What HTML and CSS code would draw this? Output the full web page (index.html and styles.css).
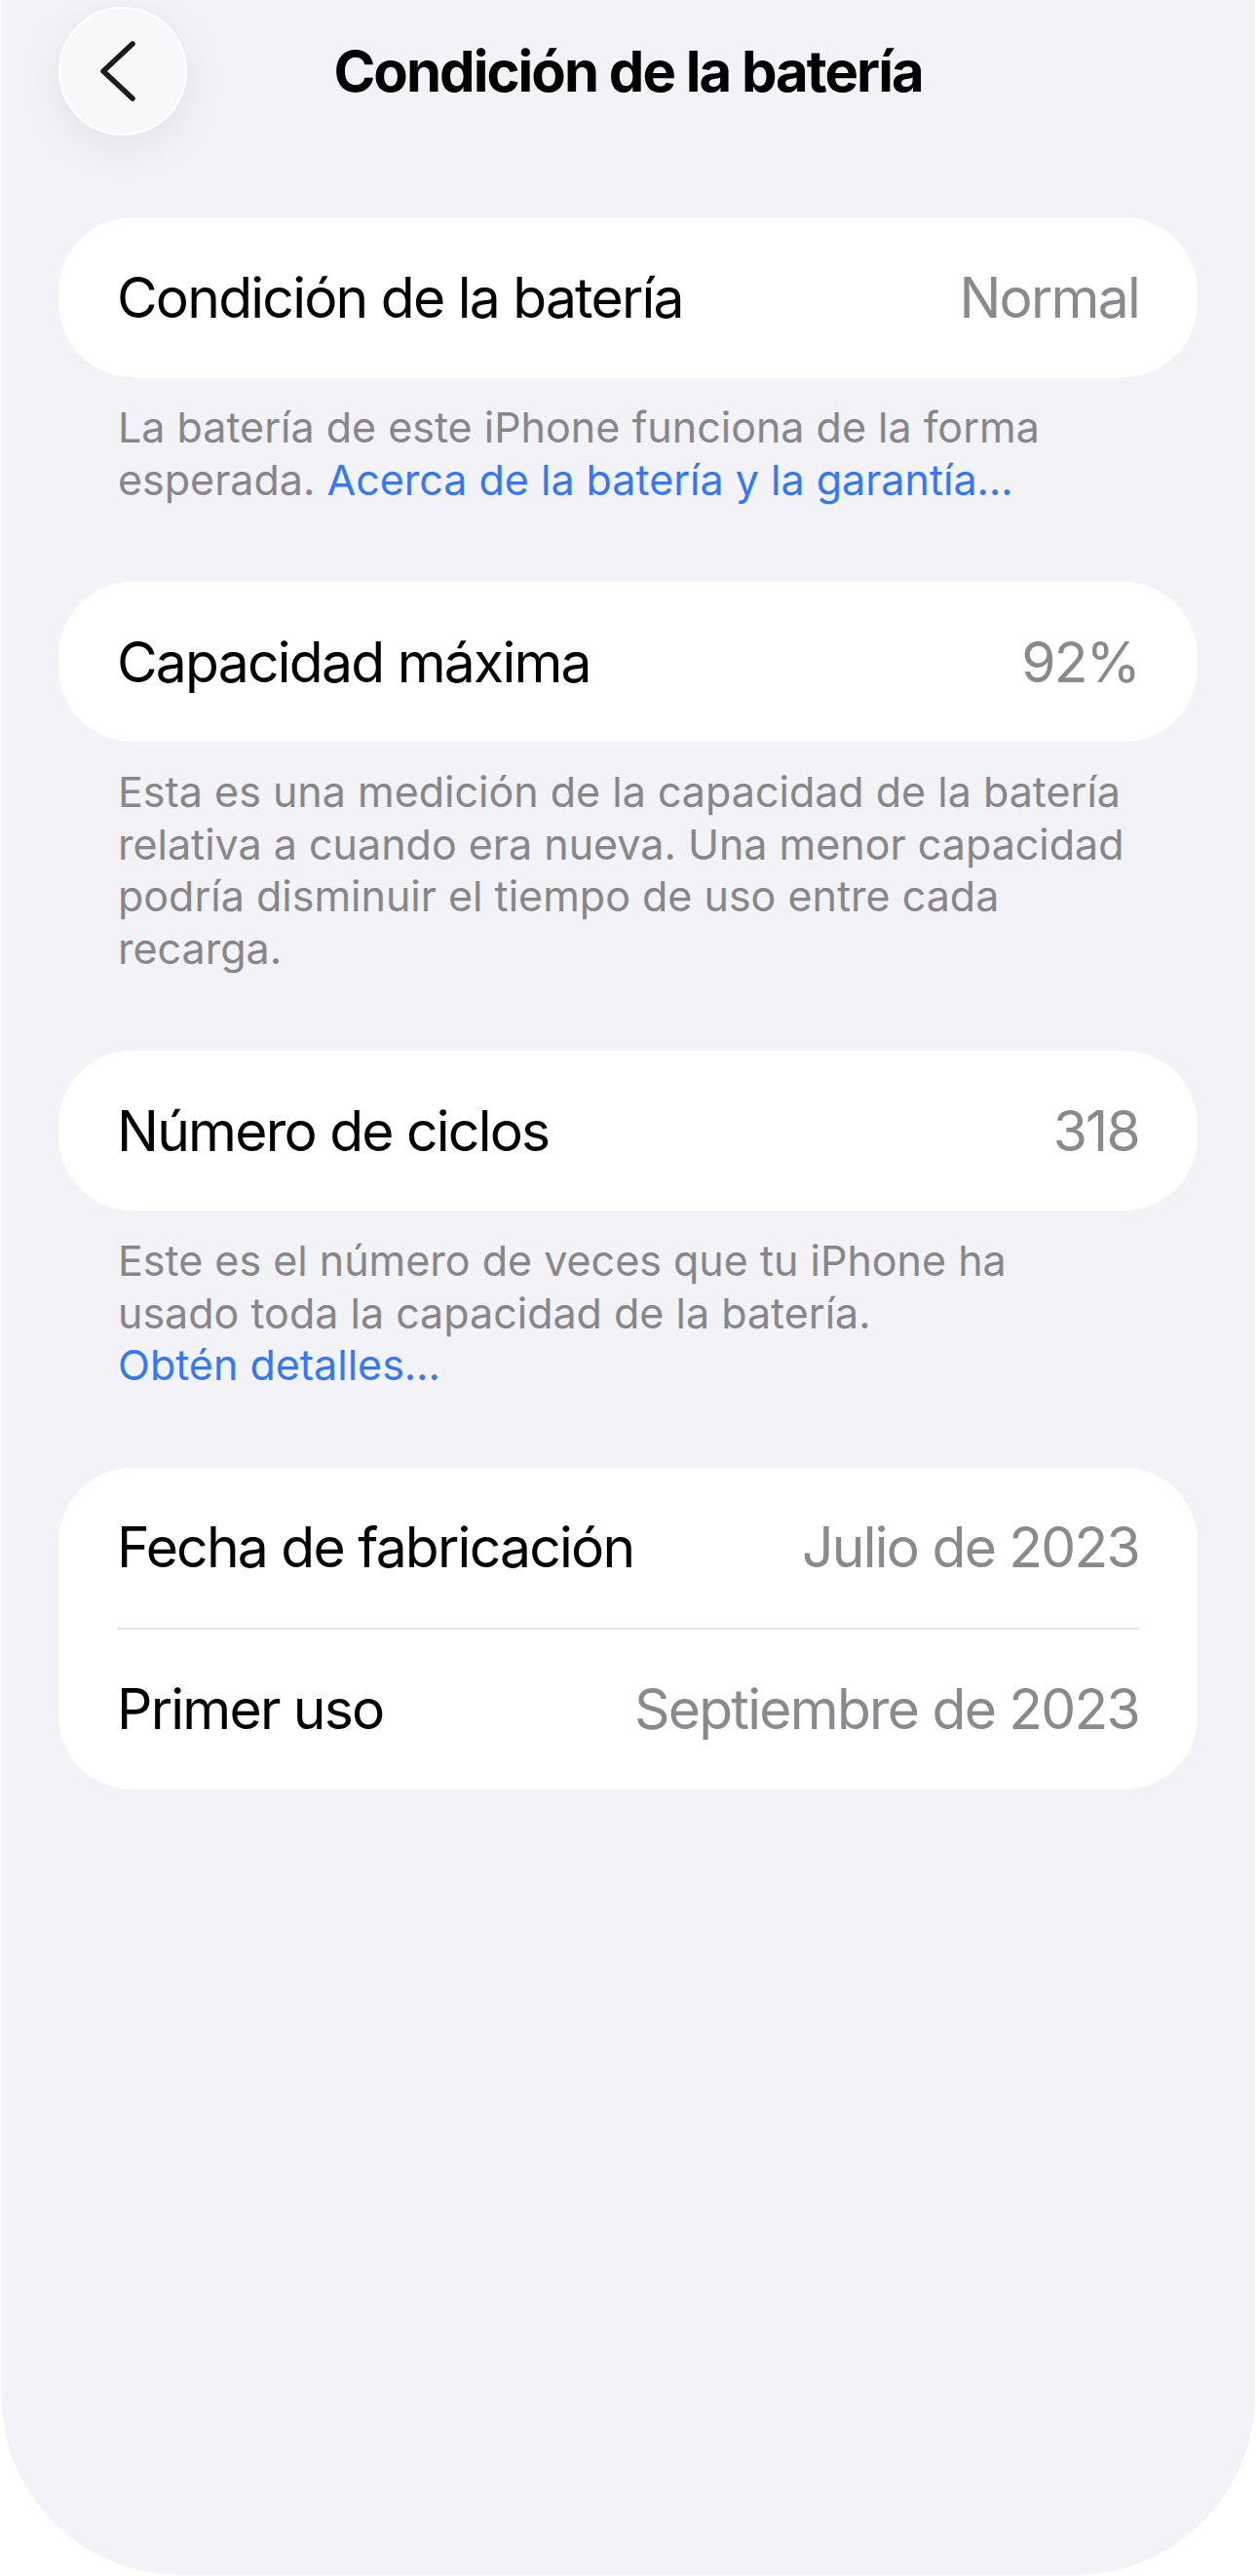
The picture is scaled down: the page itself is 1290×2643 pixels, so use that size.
FILE: index.html
```html
<!DOCTYPE html>
<html lang="es">
<head>
	<meta charset="utf-8">
	<title>Condición de la batería</title>
	<link rel="stylesheet" href="styles.css">
</head>
<body>
	<div class="screen">
		<div class="nav">
			<button class="back" aria-label="Atrás">
				<svg width="40" height="66" viewBox="0 0 40 66">
					<path d="M36 5 L6 33 L36 61" fill="none" stroke="#1c1c1e" stroke-width="5.5" stroke-linecap="round" stroke-linejoin="round"/>
				</svg>
			</button>
			<h1 class="title">Condición de la batería</h1>
			<div></div>
		</div>

		<div class="card">
			<div class="row">
				<span class="label">Condición de la batería</span>
				<span class="value">Normal</span>
			</div>
		</div>
		<p class="footer">La batería de este iPhone funciona de la forma esperada. <a href="#">Acerca de la batería y la garantía…</a></p>

		<div class="card">
			<div class="row">
				<span class="label">Capacidad máxima</span>
				<span class="value">92%</span>
			</div>
		</div>
		<p class="footer">Esta es una medición de la capacidad de la batería relativa a cuando era nueva. Una menor capacidad podría disminuir el tiempo de uso entre cada recarga.</p>

		<div class="card">
			<div class="row">
				<span class="label">Número de ciclos</span>
				<span class="value">318</span>
			</div>
		</div>
		<p class="footer">Este es el número de veces que tu iPhone ha usado toda la capacidad de la batería.<br><a href="#">Obtén detalles…</a></p>

		<div class="card">
			<div class="row">
				<span class="label">Fecha de fabricación</span>
				<span class="value">Julio de 2023</span>
			</div>
			<div class="sep"></div>
			<div class="row">
				<span class="label">Primer uso</span>
				<span class="value">Septiembre de 2023</span>
			</div>
		</div>
	</div>
</body>
</html>
```

FILE: styles.css
```css
body {
	margin: 0;
	background-color: #fff;
	font-family: "Inter", "Liberation Sans", sans-serif;
	color: #000;
}

.screen {
	min-height: 2642px;
	margin: 0 2px 0 1px;
	padding: 7px 59px 0 59px;
	box-sizing: border-box;
	background-color: #f2f2f7;
	border-radius: 0 0 185px 185px;
}

/* top bar */
.nav {
	display: grid;
	grid-template-columns: 132px 1fr 132px;
	align-items: center;
	height: 132px;
	margin-bottom: 84px;
}

.back {
	width: 132px;
	height: 132px;
	padding: 0;
	border: 2px solid #fff;
	border-radius: 50%;
	background-color: #f8f8fa;
	box-shadow: 0 12px 44px rgba(0, 0, 0, 0.07);
	display: flex;
	align-items: center;
	justify-content: center;
	cursor: pointer;
}

.back svg {
	margin-left: -12px;
}

.title {
	margin: 0;
	text-align: center;
	font-size: 58px;
	font-weight: 700;
	letter-spacing: -0.034em;
	line-height: 1;
}

/* grouped cells */
.card {
	background-color: #fff;
	border-radius: 76px;
}

.row {
	display: flex;
	justify-content: space-between;
	align-items: center;
	height: 164px;
	padding: 0 60px;
	font-size: 57px;
	letter-spacing: -0.031em;
}

.value {
	color: #8a8a8e;
}

.sep {
	height: 2px;
	margin: 0 60px;
	background-color: #e3e3e6;
}

.footer {
	margin: 0 0 78px 0;
	padding: 25px 67px 0 61px;
	font-size: 43px;
	line-height: 53.5px;
	color: #86868b;
}

.footer a {
	color: #3478f6;
	text-decoration: none;
}
```
